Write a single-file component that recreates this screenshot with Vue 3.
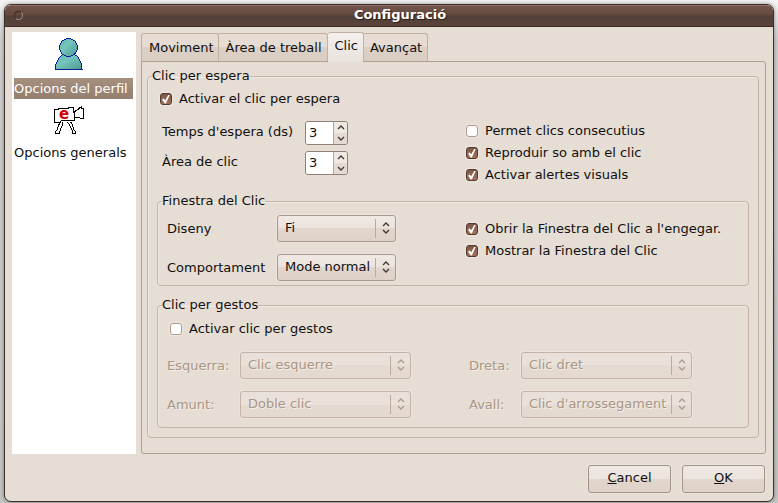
<script setup>
import { reactive, ref } from 'vue'

const tabs = ['Moviment', 'Àrea de treball', 'Clic', 'Avançat']
const activeTab = ref('Clic')
const profile = ref('perfil')

const dwell = reactive({ enabled: true, time: 3, area: 3 })
const spins = [
  { key: 'time', label: "Temps d'espera (ds)" },
  { key: 'area', label: 'Àrea de clic' }
]
const dwellOptions = reactive([
  { id: 'consecutive', label: 'Permet clics consecutius', on: false },
  { id: 'sound', label: 'Reproduir so amb el clic', on: true },
  { id: 'alerts', label: 'Activar alertes visuals', on: true }
])
const windowSelects = [
  { id: 'design', label: 'Diseny', value: 'Fi' },
  { id: 'behaviour', label: 'Comportament', value: 'Mode normal' }
]
const windowOptions = reactive([
  { id: 'open', label: "Obrir la Finestra del Clic a l'engegar.", on: true },
  { id: 'show', label: 'Mostrar la Finestra del Clic', on: true }
])
const gesturesOn = ref(false)
const gestures = [
  { id: 'left', label: 'Esquerra:', value: 'Clic esquerre' },
  { id: 'right', label: 'Dreta:', value: 'Clic dret' },
  { id: 'up', label: 'Amunt:', value: 'Doble clic' },
  { id: 'down', label: 'Avall:', value: "Clic d'arrossegament" }
]
</script>

<template>
  <div class="desktop">
    <div class="window">
      <header class="titlebar">
        <span class="knob"></span>
        <h1>Configuració</h1>
      </header>

      <div class="content">
        <nav class="sidebar">
          <button class="item" :class="{ selected: profile === 'perfil' }" @click="profile = 'perfil'">
            <svg class="pic" width="28" height="32" viewBox="0 0 28 32">
              <defs>
                <linearGradient id="head" x1="0" y1="0" x2="1" y2="1">
                  <stop offset="0" stop-color="#63b3aa" />
                  <stop offset="0.4" stop-color="#74c6bd" />
                  <stop offset="1" stop-color="#4d9790" />
                </linearGradient>
              </defs>
              <g fill="url(#head)" stroke="#0a1f96" shape-rendering="crispEdges">
                <path d="M0.5 31.5V27.500L2.500 22.500L4.500 19.500L7.500 16.500H19.500L22.500 18.500L24.500 21.500L26.500 26.500V30L27.500 31.500Z" />
                <circle cx="13.500" cy="9.500" r="9" />
              </g>
            </svg>
            <span class="name">Opcions del perfil</span>
          </button>
          <button class="item" :class="{ selected: profile === 'generals' }" @click="profile = 'generals'">
            <svg class="pic" width="30" height="28" viewBox="0 0 30 28">
              <g fill="#fff" stroke="#000" shape-rendering="crispEdges">
                <path d="M6.500 16L4.500 19.500L3.500 23.500L1.500 25.500V27.500H5.500L6.500 22.500L8.500 19.500V16" />
                <path d="M13.500 16L16.500 20.500L18.500 25.500V27.500H21.500V25.500L19.500 23.500L18.500 18.500L16.500 16" />
                <path d="M0.5 16.500V3.500H4.500V2.500H14.500V1.500H19.500V5.500H20.500L22.500 4.500L27.500 0.5V2.500H29.500V12.500H27.500L24.500 11.500H20.500V14.500H7.500L5.500 16.500Z" />
                <path d="M27.500 0.5V2.500M19.500 5.500L20.500 7.500V11.500" fill="none" />
              </g>
              <text x="10" y="13" text-anchor="middle" class="mark">e</text>
            </svg>
            <span class="name">Opcions generals</span>
          </button>
        </nav>

        <main class="tabs">
          <div class="tabbar" role="tablist">
            <button v-for="t in tabs" :key="t" role="tab" class="tab" :class="{ active: t === activeTab }"
              :aria-selected="t === activeTab" @click="activeTab = t">{{ t }}</button>
          </div>

          <section class="panel" role="tabpanel">
            <fieldset class="group">
              <legend>Clic per espera</legend>
              <label class="check"><input v-model="dwell.enabled" type="checkbox" />Activar el clic per espera</label>

              <div class="row dwell">
                <div class="spins">
                  <div v-for="s in spins" :key="s.key" class="field">
                    <label :for="s.key">{{ s.label }}</label>
                    <span class="spin">
                      <input :id="s.key" v-model.number="dwell[s.key]" type="text" />
                      <span class="steps">
                        <button aria-label="+" @click="dwell[s.key]++">
                          <svg width="8" height="5" viewBox="0 0 8 5"><path d="M1 4L4 1L7 4" /></svg>
                        </button>
                        <button aria-label="-" @click="dwell[s.key]--">
                          <svg width="8" height="5" viewBox="0 0 8 5"><path d="M1 1L4 4L7 1" /></svg>
                        </button>
                      </span>
                    </span>
                  </div>
                </div>
                <div class="checks">
                  <label v-for="o in dwellOptions" :key="o.id" class="check"><input v-model="o.on" type="checkbox" />{{ o.label }}</label>
                </div>
              </div>

              <fieldset class="group inner">
                <legend>Finestra del Clic</legend>
                <div class="row">
                  <div class="combos">
                    <template v-for="s in windowSelects" :key="s.id">
                      <label :for="s.id">{{ s.label }}</label>
                      <span class="combo">
                        <select :id="s.id"><option>{{ s.value }}</option></select>
                        <svg width="8" height="12" viewBox="0 0 8 12"><path d="M1 4L4 1L7 4M1 8L4 11L7 8" /></svg>
                      </span>
                    </template>
                  </div>
                  <div class="checks">
                    <label v-for="o in windowOptions" :key="o.id" class="check"><input v-model="o.on" type="checkbox" />{{ o.label }}</label>
                  </div>
                </div>
              </fieldset>

              <fieldset class="group inner">
                <legend>Clic per gestos</legend>
                <label class="check gesture"><input v-model="gesturesOn" type="checkbox" />Activar clic per gestos</label>
                <div class="gestures" :class="{ off: !gesturesOn }">
                  <template v-for="g in gestures" :key="g.id">
                    <label :for="g.id">{{ g.label }}</label>
                    <span class="combo wide">
                      <select :id="g.id" :disabled="!gesturesOn"><option>{{ g.value }}</option></select>
                      <svg width="8" height="12" viewBox="0 0 8 12"><path d="M1 4L4 1L7 4M1 8L4 11L7 8" /></svg>
                    </span>
                  </template>
                </div>
              </fieldset>
            </fieldset>
          </section>
        </main>
      </div>

      <footer class="actions">
        <button class="push"><u>C</u>ancel</button>
        <button class="push"><u>O</u>K</button>
      </footer>
    </div>
  </div>
</template>

<style>
body {
  background: #fff;
}
</style>

<style scoped>
.desktop,
.desktop * {
  box-sizing: border-box;
}

.desktop {
  padding: 4px 4px 2px;
  background: linear-gradient(#f4f4f4, #d0d0d0 40px, #c4c6c4);
  color: #101010;
  font: 13px/18px "DejaVu Sans", sans-serif;
}

.desktop button,
.desktop input,
.desktop select {
  margin: 0;
  font: inherit;
  color: inherit;
}

.window {
  overflow: hidden;
  border: 1px solid #3c302c;
  border-radius: 7px;
  background: #e6ddd4;
  box-shadow: 0 0 4px rgba(0, 0, 0, 0.4);
}

.titlebar {
  display: grid;
  grid-template-columns: 26px 1fr 4px;
  align-items: center;
  height: 22px;
  padding-bottom: 2px;
  border-top: 1px solid #8f7062;
  border-bottom: 1px solid #3a2a25;
  background: linear-gradient(#73554a, #63493f 45%, #51403a 50%, #5b4439);
}

.titlebar h1 {
  margin: 0;
  color: #fff;
  font-size: 13px;
  line-height: 18px;
  text-align: center;
  text-shadow: 1px 1px 1px #2b1d18;
}

.knob {
  width: 9px;
  height: 9px;
  margin-left: 9px;
  border: 1px solid #3b2b25;
  border-right-color: #a08b82;
  border-bottom-color: #a08b82;
  border-radius: 50%;
}

.content {
  display: flex;
  gap: 5px;
  padding: 5px 7px 0;
}

.sidebar {
  display: flex;
  flex-direction: column;
  gap: 7px;
  flex: none;
  width: 124px;
  padding: 6px 3px 6px 2px;
  background: #fff;
}

.item {
  display: flex;
  flex-direction: column;
  align-items: center;
  gap: 8px;
  padding: 0;
  border: 0;
  background: none;
  text-align: left;
}

.pic {
  display: block;
  margin-right: 10px;
}

.mark {
  fill: #d40000;
  font: bold 15px "DejaVu Sans", sans-serif;
}

.name {
  align-self: stretch;
  line-height: 21px;
  white-space: nowrap;
}

.selected .name {
  background: linear-gradient(#a8907e, #9c8676 50%, #957f6f);
  color: #fff;
}

.tabs {
  flex: 1;
  min-width: 0;
}

.tabbar {
  display: flex;
  align-items: flex-end;
  height: 29px;
}

.tab {
  height: 28px;
  padding: 0 5px 0 6px;
  border: 1px solid #c2b0a1;
  border-left-width: 0;
  border-bottom: 0;
  border-radius: 0 3px 0 0;
  background: linear-gradient(#e6dcd4 50%, #dccfc5 50%, #dacdc2);
  white-space: nowrap;
}

.tab:first-child {
  padding-left: 7px;
  border-left-width: 1px;
  border-radius: 3px 3px 0 0;
}

.desktop .tab.active {
  position: relative;
  height: 30px;
  margin-bottom: -1px;
  padding: 0 5px 4px 7px;
  border-radius: 3px 3px 0 0;
  background: linear-gradient(#f4f0ed, #eee9e5 50%, #e9e2dc);
}

.panel {
  padding: 5px 6px 15px 5px;
  border: 1px solid #b09e8f;
  border-radius: 0 3px 3px 3px;
}

.group {
  min-width: 0;
  margin: 0;
  padding: 3px 9px 9px;
  border: 1px solid #c5b4a6;
  border-radius: 4px;
  box-shadow: inset 1px 1px #f0eae4;
}

.group legend {
  margin-left: -5px;
  padding: 0;
  line-height: 18px;
}

.check {
  display: flex;
  align-items: center;
  gap: 7px;
  height: 22px;
  margin-left: 3px;
  white-space: nowrap;
}

.check input {
  display: grid;
  place-items: center;
  appearance: none;
  flex: none;
  width: 12px;
  height: 12px;
  border: 1px solid #b09a8b;
  border-radius: 3px;
  background: #fff;
  box-shadow: 0 0 1px 1px #eee7e1;
}

.check input:checked {
  border-color: #54392d;
  background: linear-gradient(#7d5748, #a37159);
}

.check input:checked::before {
  width: 8px;
  height: 9px;
  background: #fff;
  clip-path: polygon(0 55%, 20% 45%, 40% 65%, 82% 0, 100% 0, 48% 100%, 34% 100%);
  content: "";
}

.row {
  display: grid;
  grid-template-columns: 299px 1fr;
}

.dwell {
  grid-template-columns: 304px 1fr;
  margin: 10px 0 6px;
  padding-left: 5px;
}

.row .check {
  margin-left: 0;
}

.inner .checks {
  padding-top: 3px;
}

.spins {
  display: grid;
  align-content: start;
  gap: 6px;
  padding-top: 1px;
}

.field {
  display: grid;
  grid-template-columns: 143px 43px;
  align-items: center;
  height: 24px;
}

.field label {
  padding-bottom: 3px;
  white-space: nowrap;
}

.spin {
  display: flex;
  height: 24px;
  overflow: hidden;
  border: 1px solid #8f8078;
  border-radius: 3px;
}

.spin input {
  flex: 1;
  width: 0;
  padding: 0 0 0 3px;
  border: 0;
  background: #fff;
}

.steps {
  display: grid;
  grid-template-rows: 1fr 1fr;
  width: 14px;
  border-left: 1px solid #b5a597;
}

.steps button {
  display: grid;
  place-items: center;
  padding: 0;
  border: 0;
  background: #e6dbd3;
}

.steps button:first-child {
  background: #efe8e3;
}

.steps path,
.combo path {
  fill: none;
  stroke: #3f3a37;
  stroke-width: 1.4;
}

.inner {
  padding: 5px 9px 4px;
}

.inner + .inner {
  margin-top: 10px;
  padding: 4px 9px 9px;
}

.combos {
  display: grid;
  grid-template-columns: 110px 119px;
  align-items: center;
  align-content: start;
  row-gap: 12px;
}

.combo {
  position: relative;
  display: block;
  height: 27px;
}

.wide {
  width: 171px;
}

.combo::after {
  position: absolute;
  top: 4px;
  right: 20px;
  bottom: 4px;
  width: 1px;
  background: #bcaa9c;
  content: "";
}

.combo svg {
  position: absolute;
  top: 7px;
  right: 6px;
  pointer-events: none;
}

.combo select {
  display: block;
  appearance: none;
  width: 100%;
  height: 27px;
  padding: 0 20px 2px 7px;
  border: 1px solid #a99a8e;
  border-radius: 3px;
  background: linear-gradient(#efe8e3, #ebe4de 50%, #e2d6cd 50%, #dfd1c7);
  box-shadow: 0 0 1px 1px #ece5de;
}

.gesture {
  margin-bottom: 12px;
}

.gestures {
  display: grid;
  grid-template-columns: 73px 229px 52px 171px;
  align-items: center;
  row-gap: 12px;
}

.off {
  color: #a89687;
  text-shadow: 1px 1px #f3eee9;
}

.off .combo select {
  border-color: #c4b3a6;
  background: linear-gradient(#e9e1d9, #eae1da 50%, #e5dbd2 50%, #e4d9cf);
  text-shadow: 1px 1px #f3eee9;
  opacity: 1;
}

.off .combo path {
  stroke: #ad9c8d;
}

.actions {
  display: flex;
  justify-content: flex-end;
  gap: 11px;
  padding: 11px 8px 8px;
}

.push {
  width: 83px;
  height: 28px;
  padding: 0 0 2px;
  border: 1px solid #a3948a;
  border-radius: 3px;
  background: linear-gradient(#efe8e3, #ebe4df 50%, #e2d6cd 50%, #dfd2c8);
  box-shadow: 0 0 1px 1px #ece5de;
}
</style>
